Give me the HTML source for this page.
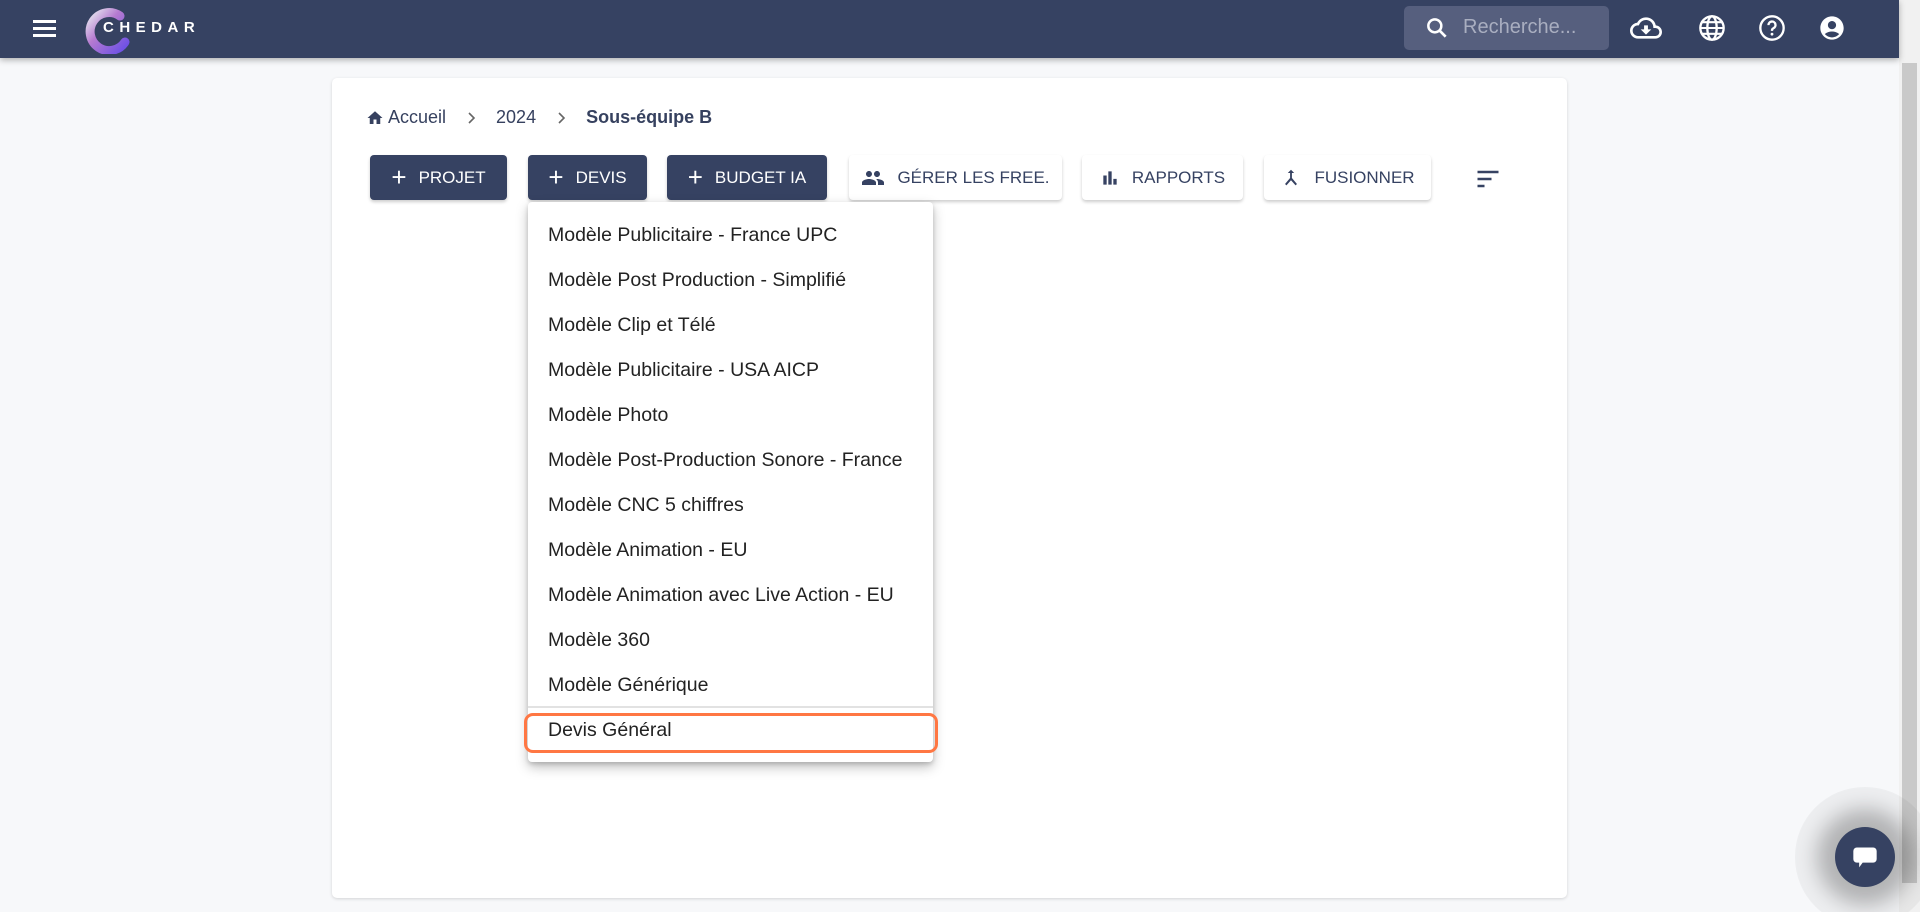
<!DOCTYPE html>
<html><head><meta charset="utf-8"><style>
*{box-sizing:border-box;margin:0;padding:0}
body{width:1920px;height:912px;overflow:hidden;background:#f7f8fa;font-family:"Liberation Sans",sans-serif;position:relative}
.hdr{position:absolute;left:0;top:0;width:1899px;height:58px;background:#364262;box-shadow:0 2px 6px rgba(0,0,0,.3);z-index:2}
.sb{position:absolute;right:0;top:0;width:21px;height:912px;background:#f1f1f1}
.sb .th{position:absolute;left:3px;top:63px;width:15px;height:820px;background:#c9c9c9}
.card{position:absolute;left:332px;top:78px;width:1235px;height:820px;background:#fff;border-radius:5px;box-shadow:0 1px 3px rgba(0,0,0,.15)}
.bc{position:absolute;top:107px;left:366px;font-size:18px;color:#36415f;display:flex;align-items:center}
.btn{position:absolute;top:155px;height:45px;border-radius:4px;font-size:17px;display:flex;align-items:center;justify-content:center;gap:12px;box-shadow:0 2px 3px rgba(0,0,0,.2)}
.dk{background:#364262;color:#fff}
.lt{background:#fff;color:#364262}
.menu{position:absolute;left:528px;top:202px;width:405px;height:560px;background:#fff;border-radius:4px;box-shadow:0 5px 12px rgba(0,0,0,.25),0 2px 4px rgba(0,0,0,.15)}
.it{position:absolute;left:20px;font-size:19.5px;color:#222;line-height:24px}
.chat{position:absolute;left:1835px;top:827px;width:60px;height:60px;border-radius:50%;background:#364262;box-shadow:0 0 20px 18px rgba(0,0,0,.25),0 0 0 40px rgba(0,0,0,.04)}
</style></head><body>
<div class="hdr">
 <div style="position:absolute;left:33px;top:20px;width:23px;height:3px;background:#fff;box-shadow:0 7px 0 #fff,0 14px 0 #fff"></div>
 <svg style="position:absolute;left:82px;top:6px" width="48" height="48" viewBox="0 0 48 48"><defs><linearGradient id="g" x1="0" y1="0" x2="1" y2="1"><stop offset="0" stop-color="#e6e6ef"/><stop offset=".4" stop-color="#b57ad0"/><stop offset="1" stop-color="#6b4fe6"/></linearGradient></defs><path d="M38 10 A19 19 0 1 0 43 36" fill="none" stroke="url(#g)" stroke-width="9" stroke-linecap="round"/></svg>
 <div style="position:absolute;left:103px;top:19px;color:#fff;font-size:15px;font-weight:bold;letter-spacing:5.5px">CHEDAR</div>
 <div style="position:absolute;left:1404px;top:6px;width:205px;height:44px;background:#565f7e;border-radius:5px"></div>
 <svg style="position:absolute;left:1424px;top:15px" width="26" height="26" viewBox="0 0 24 24"><circle cx="10" cy="10" r="6" fill="none" stroke="#fff" stroke-width="2.3"/><path d="M14.5 14.5 20 20" stroke="#fff" stroke-width="2.5"/></svg>
 <div style="position:absolute;left:1463px;top:16px;font-size:20px;color:#a9aec0">Recherche...</div>
 <svg style="position:absolute;left:1630px;top:12px" width="32" height="32" viewBox="0 0 24 24"><path d="M19.35 10.04A7.49 7.49 0 0 0 12 4C9.11 4 6.6 5.64 5.35 8.04A5.994 5.994 0 0 0 0 14c0 3.31 2.690 6 6 6h13c2.76 0 5-2.24 5-5 0-2.64-2.05-4.78-4.65-4.960zM19 18H6c-2.21 0-4-1.790-4-4s1.790-4 4-4h.71C7.37 7.690 9.48 6 12 6c3.040 0 5.5 2.460 5.5 5.5v.5H19c1.660 0 3 1.340 3 3s-1.340 3-3 3zm-5.55-8h-2.9v3H8l4 4 4-4h-2.55z" fill="#fff"/></svg>
 <svg style="position:absolute;left:1698px;top:14px" width="28" height="28" viewBox="0 0 24 24"><circle cx="12" cy="12" r="10" fill="none" stroke="#fff" stroke-width="2"/><ellipse cx="12" cy="12" rx="4" ry="10" fill="none" stroke="#fff" stroke-width="2"/><path d="M2 12h20M3.5 7h17M3.5 17h17" stroke="#fff" stroke-width="1.8"/></svg>
 <svg style="position:absolute;left:1758px;top:14px" width="28" height="28" viewBox="0 0 24 24"><circle cx="12" cy="12" r="10" fill="none" stroke="#fff" stroke-width="2"/><path d="M9 9.5a3 3 0 1 1 4.2 2.7c-.8.4-1.2 1-1.2 1.8v.5" fill="none" stroke="#fff" stroke-width="2"/><circle cx="12" cy="17.3" r="1.2" fill="#fff"/></svg>
 <svg style="position:absolute;left:1818px;top:14px" width="28" height="28" viewBox="0 0 24 24"><path d="M12 2C6.48 2 2 6.48 2 12s4.48 10 10 10 10-4.48 10-10S17.52 2 12 2zm0 4c1.93 0 3.5 1.57 3.5 3.5S13.93 13 12 13s-3.5-1.57-3.5-3.5S10.07 6 12 6zm0 14c-2.03 0-4.43-.82-6.14-2.88a9.95 9.95 0 0 1 12.28 0C16.43 19.18 14.03 20 12 20z" fill="#fff"/></svg>
</div>
<div class="sb"><div class="th"></div></div>
<div class="card"></div>
<div class="bc"><svg width="18" height="18" viewBox="0 0 24 24"><path d="M10 20v-6h4v6h5v-8h3L12 3 2 12h3v8z" fill="#36415f"/></svg><span style="margin-left:4px">Accueil</span><svg style="margin:0 18px 0 20px" width="12" height="14" viewBox="0 0 12 14"><path d="M3 2l5 5-5 5" fill="none" stroke="#666" stroke-width="1.6"/></svg><span>2024</span><svg style="margin:0 18px 0 20px" width="12" height="14" viewBox="0 0 12 14"><path d="M3 2l5 5-5 5" fill="none" stroke="#666" stroke-width="1.6"/></svg><b>Sous-équipe B</b></div>
<div class="btn dk" style="left:370px;width:137px"><span style="font-size:26px;font-weight:300">+</span>PROJET</div>
<div class="btn dk" style="left:528px;width:119px"><span style="font-size:26px;font-weight:300">+</span>DEVIS</div>
<div class="btn dk" style="left:667px;width:160px"><span style="font-size:26px;font-weight:300">+</span>BUDGET IA</div>
<div class="btn lt" style="left:849px;width:213px"><svg width="24" height="24" viewBox="0 0 24 24"><path d="M16 11c1.66 0 2.99-1.34 2.99-3S17.66 5 16 5c-1.66 0-3 1.34-3 3s1.34 3 3 3zm-8 0c1.66 0 2.99-1.34 2.99-3S9.66 5 8 5C6.34 5 5 6.34 5 8s1.34 3 3 3zm0 2c-2.33 0-7 1.17-7 3.5V19h14v-2.5c0-2.33-4.67-3.5-7-3.5zm8 0c-.29 0-.62.02-.97.05 1.16.84 1.97 1.97 1.97 3.450V19h6v-2.5c0-2.33-4.67-3.5-7-3.5z" fill="#364262"/></svg>GÉRER LES FREE.</div>
<div class="btn lt" style="left:1082px;width:161px"><svg width="20" height="20" viewBox="0 0 24 24"><path d="M4 9h4v11H4zM10 4h4v16h-4zM16 13h4v7h-4z" fill="#364262"/></svg>RAPPORTS</div>
<div class="btn lt" style="left:1264px;width:167px"><svg width="22" height="22" viewBox="0 0 24 24"><path d="M12 3l-3.5 3.5h2.5v5.5l-5.5 6.5 1.5 1.5L12 14.5l5 5.5 1.5-1.5L13 12V6.5h2.5z" fill="#364262"/></svg>FUSIONNER</div>
<svg style="position:absolute;left:1474px;top:165px" width="28" height="28" viewBox="0 0 24 24"><path d="M3 6h18M3 12h12M3 18h6" stroke="#364262" stroke-width="2.2"/></svg>
<div class="menu">
 <div class="it" style="top:21px">Modèle Publicitaire - France UPC</div>
 <div class="it" style="top:66px">Modèle Post Production - Simplifié</div>
 <div class="it" style="top:111px">Modèle Clip et Télé</div>
 <div class="it" style="top:156px">Modèle Publicitaire - USA AICP</div>
 <div class="it" style="top:201px">Modèle Photo</div>
 <div class="it" style="top:246px">Modèle Post-Production Sonore - France</div>
 <div class="it" style="top:291px">Modèle CNC 5 chiffres</div>
 <div class="it" style="top:336px">Modèle Animation - EU</div>
 <div class="it" style="top:381px">Modèle Animation avec Live Action - EU</div>
 <div class="it" style="top:426px">Modèle 360</div>
 <div class="it" style="top:471px">Modèle Générique</div>
 <div style="position:absolute;left:0;right:0;top:504px;height:2px;background:#e2e2e2"></div>
 <div class="it" style="top:516px">Devis Général</div>
</div>
<div style="position:absolute;left:524px;top:713px;width:414px;height:40px;border:3.5px solid #ff7743;border-radius:9px"></div>
<div class="chat"><svg style="position:absolute;left:16px;top:17px" width="28" height="28" viewBox="0 0 24 24"><path d="M5 3h14a3 3 0 0 1 3 3v7a3 3 0 0 1-3 3H10l-3 4v-4H5a3 3 0 0 1-3-3V6a3 3 0 0 1 3-3z" fill="#fff"/></svg></div>
</body></html>
